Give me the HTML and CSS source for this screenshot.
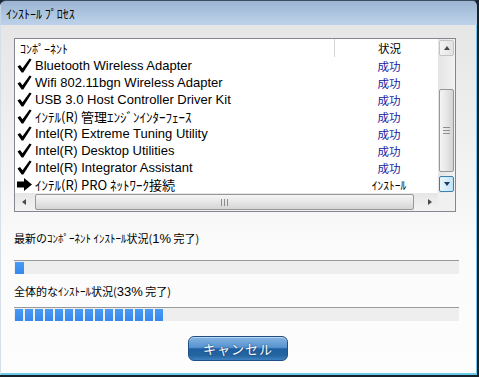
FILE: index.html
```html
<!DOCTYPE html>
<html lang="ja">
<head>
  <meta charset="UTF-8">
  <meta name="viewport" content="width=device-width, initial-scale=1.0">
  <title>インストール プロセス</title>
  <link rel="stylesheet" href="styles.css">
</head>
<body>

<div class="window">
  <div class="title-bar">ｲﾝｽﾄｰﾙ ﾌﾟﾛｾｽ</div>

  <div class="content">
    <div class="list-box">
      <div class="list-top">
        <div class="list-view">
          <div class="list-head">
            <span class="head-name">ｺﾝﾎﾟｰﾈﾝﾄ</span>
            <span class="head-status">状況</span>
          </div>

          <div class="row">
            <span class="row-name"><svg class="icon" viewBox="0 0 15 15"><path d="M0.5 8.6 L3 6.9 L5.5 10.3 L12.6 0.5 L14.6 1.6 L6.3 14.5 L4.6 14.5 Z"/></svg>Bluetooth Wireless Adapter</span>
            <span class="row-status done">成功</span>
          </div>
          <div class="row">
            <span class="row-name"><svg class="icon" viewBox="0 0 15 15"><path d="M0.5 8.6 L3 6.9 L5.5 10.3 L12.6 0.5 L14.6 1.6 L6.3 14.5 L4.6 14.5 Z"/></svg>Wifi 802.11bgn Wireless Adapter</span>
            <span class="row-status done">成功</span>
          </div>
          <div class="row">
            <span class="row-name"><svg class="icon" viewBox="0 0 15 15"><path d="M0.5 8.6 L3 6.9 L5.5 10.3 L12.6 0.5 L14.6 1.6 L6.3 14.5 L4.6 14.5 Z"/></svg>USB 3.0 Host Controller Driver Kit</span>
            <span class="row-status done">成功</span>
          </div>
          <div class="row">
            <span class="row-name"><svg class="icon" viewBox="0 0 15 15"><path d="M0.5 8.6 L3 6.9 L5.5 10.3 L12.6 0.5 L14.6 1.6 L6.3 14.5 L4.6 14.5 Z"/></svg><span class="jp">ｲﾝﾃﾙ(R) 管理ｴﾝｼﾞﾝｲﾝﾀｰﾌｪｰｽ</span></span>
            <span class="row-status done">成功</span>
          </div>
          <div class="row">
            <span class="row-name"><svg class="icon" viewBox="0 0 15 15"><path d="M0.5 8.6 L3 6.9 L5.5 10.3 L12.6 0.5 L14.6 1.6 L6.3 14.5 L4.6 14.5 Z"/></svg>Intel(R) Extreme Tuning Utility</span>
            <span class="row-status done">成功</span>
          </div>
          <div class="row">
            <span class="row-name"><svg class="icon" viewBox="0 0 15 15"><path d="M0.5 8.6 L3 6.9 L5.5 10.3 L12.6 0.5 L14.6 1.6 L6.3 14.5 L4.6 14.5 Z"/></svg>Intel(R) Desktop Utilities</span>
            <span class="row-status done">成功</span>
          </div>
          <div class="row">
            <span class="row-name"><svg class="icon" viewBox="0 0 15 15"><path d="M0.5 8.6 L3 6.9 L5.5 10.3 L12.6 0.5 L14.6 1.6 L6.3 14.5 L4.6 14.5 Z"/></svg>Intel(R) Integrator Assistant</span>
            <span class="row-status done">成功</span>
          </div>
          <div class="row">
            <span class="row-name"><svg class="icon" viewBox="0 0 15 15"><path d="M0 4.5 H7 V1 L15 7.5 L7 14 V10.5 H0 Z"/></svg><span class="jp">ｲﾝﾃﾙ(R) PRO ﾈｯﾄﾜｰｸ接続</span></span>
            <span class="row-status">ｲﾝｽﾄｰﾙ</span>
          </div>
        </div>

        <!-- vertical scrollbar -->
        <div class="v-scroll">
          <div class="sb-button"><span class="arrow-up"></span></div>
          <div class="v-track">
            <div class="v-thumb"><span class="grip-h"></span></div>
          </div>
          <div class="sb-button hot"><span class="arrow-down"></span></div>
        </div>
      </div>

      <!-- horizontal scrollbar -->
      <div class="h-scroll">
        <div class="sb-side"><span class="arrow-left"></span></div>
        <div class="h-track">
          <div class="h-thumb"><span class="grip-v"></span></div>
        </div>
        <div class="sb-side"><span class="arrow-right"></span></div>
        <div class="sb-corner"></div>
      </div>
    </div>

    <div class="progress-label first">最新のｺﾝﾎﾟｰﾈﾝﾄ ｲﾝｽﾄｰﾙ状況(<span class="num">1%</span> 完了)</div>
    <div class="progress bar-one">
      <span class="segment wide"></span>
    </div>

    <div class="progress-label second">全体的なｲﾝｽﾄｰﾙ状況(<span class="num">33%</span> 完了)</div>
    <div class="progress bar-two">
      <span class="segment"></span><span class="segment"></span><span class="segment"></span>
      <span class="segment"></span><span class="segment"></span><span class="segment"></span>
      <span class="segment"></span><span class="segment"></span><span class="segment"></span>
      <span class="segment"></span><span class="segment"></span><span class="segment"></span>
      <span class="segment"></span><span class="segment"></span><span class="segment"></span>
    </div>

    <div class="actions">
      <button class="cancel-button">キャンセル</button>
    </div>
  </div>
</div>

</body>
</html>
```

FILE: styles.css
```css
body {
    margin: 0;
    background: #1b2734;
    font-family: "Liberation Sans", "Noto Sans CJK JP", sans-serif;
    color: #000;
}
.window {
    width: 479px;
    height: 377px;
    box-sizing: border-box;
    display: flex;
    flex-direction: column;
    border-top: 1px solid #3a4c60;
    border-right: 2px solid #16212c;
    border-bottom: 2px solid #16212c;
    border-radius: 6px 6px 0 0;
    overflow: hidden;
    background: #1b2734;
}
.title-bar {
    height: 24px;
    flex-shrink: 0;
    display: flex;
    align-items: center;
    padding-left: 5px;
    border-left: 1px solid #c6d6e8;
    background: linear-gradient(#9cb4d2, #b0c7e1 60%, #bdd2e9);
    font-family: "Noto Sans CJK JP", sans-serif;
    font-size: 12px;
}
.content {
    flex: 1;
    display: flex;
    flex-direction: column;
    padding: 13px 0 0 13px;
    border-left: 1px solid #d6e0ea;
    border-right: 1px solid #6ccbe9;
    border-bottom: 2px solid #6ccbe9;
    background: linear-gradient(#e6e6e6, #f4f4f4 45%, #fbfbfb 65%, #fdfdfd);
}

/* list */
.list-box {
    width: 442px;
    box-sizing: border-box;
    border: 1px solid #828790;
    background: #fff;
}
.list-top {
    display: flex;
}
.list-view {
    flex: 1;
}
.list-head,
.row {
    display: flex;
    height: 17px;
    align-items: center;
}
.list-head {
    height: 18px;
}
.head-name {
    width: 314px;
    padding-left: 5px;
    font-family: "Noto Sans CJK JP", sans-serif;
    font-size: 12px;
}
.head-status,
.row-status {
    flex: 1;
    text-align: center;
    padding-left: 6px;
    font-family: "Noto Sans CJK JP", sans-serif;
    font-size: 11.5px;
}
.head-status {
    align-self: stretch;
    display: flex;
    align-items: center;
    justify-content: center;
    border-left: 1px solid #d5d5d5;
}
.row-name {
    width: 317px;
    padding-left: 2px;
    display: flex;
    align-items: center;
    font-size: 13px;
    white-space: nowrap;
}
.row-name .jp {
    font-family: "Noto Sans CJK JP", sans-serif;
    font-size: 13px;
}
.icon {
    width: 15px;
    height: 15px;
    margin-right: 3px;
    fill: #000;
    flex-shrink: 0;
}
.done {
    color: #1a1a9c;
}

/* scrollbars */
.v-scroll {
    width: 17px;
    display: flex;
    flex-direction: column;
    background: linear-gradient(90deg, #e4e4e4, #f2f2f2);
}
.sb-button {
    height: 16px;
    margin: 1px 1px 0;
    box-sizing: border-box;
    border: 1px solid #c4c4c4;
    border-radius: 2px;
    background: linear-gradient(90deg, #f4f4f4, #e2e2e2);
    display: flex;
    align-items: center;
    justify-content: center;
}
.sb-button.hot {
    margin: 0 1px 1px;
    border-color: #3c7fb1;
    background: linear-gradient(90deg, #e8f5fc, #c2e3f6);
}
.v-track {
    flex: 1;
}
.v-thumb {
    height: 83px;
    margin: 33px 1px 0;
    box-sizing: border-box;
    border: 1px solid #979797;
    border-radius: 2px;
    background: linear-gradient(90deg, #f5f5f5, #e6e6e6 50%, #d4d4d4);
    display: flex;
    align-items: center;
    justify-content: center;
}
.grip-h {
    width: 7px;
    height: 7px;
    background: repeating-linear-gradient(#8c8c8c 0 1px, transparent 1px 3px);
}
.arrow-up {
    border-left: 3.5px solid transparent;
    border-right: 3.5px solid transparent;
    border-bottom: 4px solid #4a4a4a;
}
.arrow-down {
    border-left: 3.5px solid transparent;
    border-right: 3.5px solid transparent;
    border-top: 4px solid #1f3d56;
}
.arrow-left {
    border-top: 3.5px solid transparent;
    border-bottom: 3.5px solid transparent;
    border-right: 4px solid #4a4a4a;
}
.arrow-right {
    border-top: 3.5px solid transparent;
    border-bottom: 3.5px solid transparent;
    border-left: 4px solid #4a4a4a;
}
.h-scroll {
    height: 18px;
    display: flex;
    background: linear-gradient(#e6e6e6, #f3f3f3);
}
.sb-side {
    width: 17px;
    display: flex;
    align-items: center;
    justify-content: center;
}
.h-track {
    flex: 1;
    display: flex;
    align-items: center;
}
.h-thumb {
    height: 16px;
    flex: 1;
    margin: 0 7px 0 3px;
    box-sizing: border-box;
    border: 1px solid #979797;
    border-radius: 2px;
    background: linear-gradient(#f5f5f5, #e6e6e6 50%, #d4d4d4);
    display: flex;
    align-items: center;
    justify-content: center;
}
.grip-v {
    width: 7px;
    height: 7px;
    background: repeating-linear-gradient(90deg, #8c8c8c 0 1px, transparent 1px 3px);
}
.sb-corner {
    width: 17px;
    background: #f0f0f0;
}

/* progress */
.progress-label {
    height: 16px;
    line-height: 16px;
    font-family: "Noto Sans CJK JP", sans-serif;
    font-size: 11px;
    white-space: nowrap;
}
.progress-label .num {
    font-family: "Liberation Sans", sans-serif;
    font-size: 13px;
}
.progress-label.first {
    margin-top: 18px;
}
.progress-label.second {
    margin-top: 9px;
}
.progress {
    width: 445px;
    height: 14px;
    box-sizing: border-box;
    display: flex;
    gap: 2px;
    padding: 1px 0 0 1px;
    border-top: 1px solid #9a9a9a;
    background: #eeeeee;
}
.bar-one {
    margin-top: 14px;
}
.bar-two {
    margin-top: 8px;
}
.segment {
    width: 8px;
    background: linear-gradient(#4a9af3, #3588ec);
}
.segment.wide {
    width: 9px;
}

/* button */
.actions {
    display: flex;
    justify-content: center;
    padding-right: 14px;
    margin-top: 15px;
}
.cancel-button {
    width: 100px;
    height: 25px;
    border: 1px solid #1f4f86;
    border-radius: 6px;
    background: linear-gradient(#86b5e2, #5793cf 45%, #1f5fa2 52%, #24659f 80%, #3f82c2);
    box-shadow: inset 0 1px 0 rgba(255, 255, 255, 0.45);
    color: #fff;
    font-family: "Noto Sans CJK JP", sans-serif;
    font-size: 13px;
    letter-spacing: 1px;
    text-shadow: 0 0 2px #0c3462;
    padding: 0;
}
```
